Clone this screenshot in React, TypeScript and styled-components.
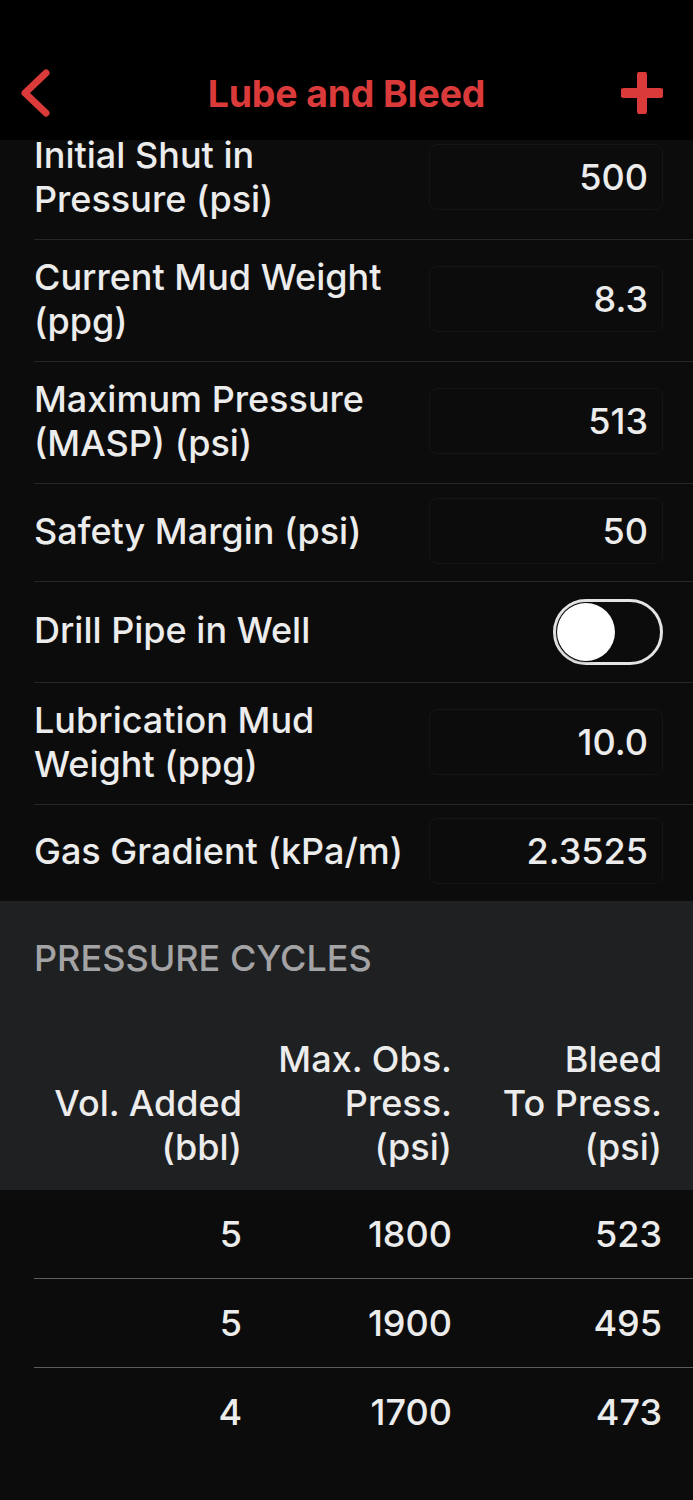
import styled, { createGlobalStyle } from "styled-components";

const GlobalStyle = createGlobalStyle`
  body {
    margin: 0;
    background: #0c0c0c;
    font-family: Inter, "Noto Sans", sans-serif;
    color: #ececec;
  }
`;

const RED = "#da3b3a";

const NavBar = styled.header`
  position: fixed;
  top: 0;
  left: 0;
  right: 0;
  height: 140px;
  box-sizing: border-box;
  padding: 46px 18px 0;
  background: #000;
  display: grid;
  grid-template-columns: 1fr auto 1fr;
  align-items: center;
  z-index: 2;
`;

const NavTitle = styled.h1`
  margin: 0;
  color: ${RED};
  font-size: 37.5px;
  font-weight: 700;
  letter-spacing: -0.2px;
`;

const NavButton = styled.button<{ $align: "start" | "end" }>`
  justify-self: ${p => p.$align};
  margin-right: ${p => (p.$align === "end" ? "12px" : "0")};
  background: none;
  border: 0;
  padding: 0;
  display: flex;
`;

const Page = styled.main`
  padding-top: 118px;
`;

const Row = styled.div<{ $height: number; $last?: boolean }>`
  box-sizing: border-box;
  margin-left: 34px;
  padding: 0 30px 4px 0;
  height: ${p => p.$height}px;
  display: flex;
  align-items: center;
  justify-content: space-between;
  border-bottom: ${p => (p.$last ? "none" : "1px solid #262626")};
`;

const Label = styled.div`
  font-size: 36px;
  font-weight: 500;
  line-height: 44px;
  white-space: pre-line;
`;

const ValueBox = styled.div`
  width: 234px;
  height: 66px;
  box-sizing: border-box;
  padding-right: 14px;
  border: 1px solid #151515;
  border-radius: 8px;
  display: flex;
  align-items: center;
  justify-content: flex-end;
  font-size: 36px;
  font-weight: 500;
`;

const Toggle = styled.div`
  width: 110px;
  height: 66px;
  margin-top: 4px;
  box-sizing: border-box;
  border: 3px solid #e4e4e4;
  border-radius: 33px;
  padding: 1px;
  display: flex;
  align-items: center;
`;

const Knob = styled.div`
  width: 58px;
  height: 58px;
  border-radius: 50%;
  background: #fff;
  box-shadow: 0 1px 3px rgba(0, 0, 0, 0.4);
`;

const Section = styled.section`
  background: #1f2022;
`;

const SectionTitle = styled.h2`
  margin: 0;
  padding: 37px 34px 0;
  font-size: 36px;
  line-height: 40px;
  font-weight: 500;
  color: #a3a3a5;
`;

const Grid = styled.div`
  display: grid;
  grid-template-columns: 208px 210px 210px;
  text-align: right;
  font-size: 36px;
  font-weight: 500;
  line-height: 44px;
`;

const TableHead = styled(Grid)`
  margin: 59px 0 0 34px;
  padding-bottom: 21px;
  align-items: end;
`;

const TableRow = styled(Grid)<{ $last?: boolean }>`
  box-sizing: border-box;
  margin-left: 34px;
  height: 89px;
  padding-bottom: 1px;
  align-items: center;
  border-bottom: ${p => (p.$last ? "none" : "1px solid #5e5e5e")};
`;

const fields = [
  { label: "Initial Shut in\nPressure (psi)", value: "500", height: 122 },
  { label: "Current Mud Weight\n(ppg)", value: "8.3", height: 122 },
  { label: "Maximum Pressure\n(MASP) (psi)", value: "513", height: 122 },
  { label: "Safety Margin (psi)", value: "50", height: 98 },
  { label: "Drill Pipe in Well", toggle: true, height: 101 },
  { label: "Lubrication Mud\nWeight (ppg)", value: "10.0", height: 122 },
  { label: "Gas Gradient (kPa/m)", value: "2.3525", height: 96 },
];

const cycles = [
  ["5", "1800", "523"],
  ["5", "1900", "495"],
  ["4", "1700", "473"],
];

export default function App() {
  return (
    <>
      <GlobalStyle />
      <NavBar>
        <NavButton $align="start" aria-label="Back">
          <svg width="36" height="50" viewBox="0 0 36 50">
            <path d="M28 5 L7 25 L28 45" fill="none" stroke={RED} strokeWidth="7" strokeLinecap="round" strokeLinejoin="round" />
          </svg>
        </NavButton>
        <NavTitle>Lube and Bleed</NavTitle>
        <NavButton $align="end" aria-label="Add">
          <svg width="42" height="42" viewBox="0 0 42 42">
            <path d="M21 3 V39 M3 21 H39" stroke={RED} strokeWidth="10" strokeLinecap="round" />
          </svg>
        </NavButton>
      </NavBar>
      <Page>
        {fields.map((f, i) => (
          <Row key={i} $height={f.height} $last={i === fields.length - 1}>
            <Label>{f.label}</Label>
            {f.toggle ? (
              <Toggle>
                <Knob />
              </Toggle>
            ) : (
              <ValueBox>{f.value}</ValueBox>
            )}
          </Row>
        ))}
        <Section>
          <SectionTitle>PRESSURE CYCLES</SectionTitle>
          <TableHead>
            <div>Vol. Added<br />(bbl)</div>
            <div>Max. Obs.<br />Press.<br />(psi)</div>
            <div>Bleed<br />To Press.<br />(psi)</div>
          </TableHead>
        </Section>
        {cycles.map((c, i) => (
          <TableRow key={i} $last={i === cycles.length - 1}>
            {c.map((v, j) => (
              <div key={j}>{v}</div>
            ))}
          </TableRow>
        ))}
      </Page>
    </>
  );
}
